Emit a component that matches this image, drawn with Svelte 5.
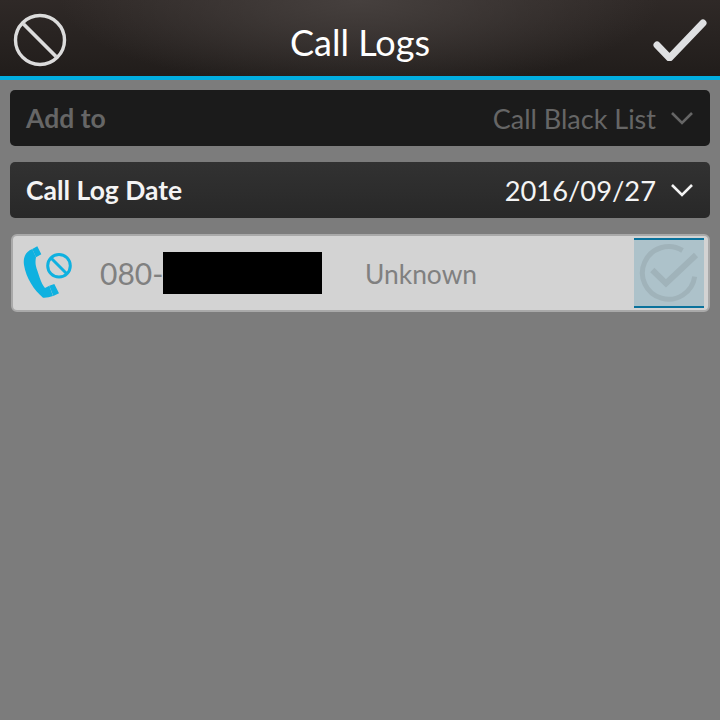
<script>
	let addTo = { label: 'Add to', value: 'Call Black List' };
	let logDate = { label: 'Call Log Date', value: '2016/09/27' };
</script>

<div class="screen">
	<header class="titlebar">
		<svg class="cancel" width="54" height="54" viewBox="0 0 54 54">
			<circle cx="27" cy="27" r="24.5" fill="none" stroke="#dcdcdc" stroke-width="3.4" />
			<line x1="10.500" y1="11" x2="43" y2="43.500" stroke="#dcdcdc" stroke-width="3.8" />
		</svg>
		<h1>Call Logs</h1>
		<svg class="accept" width="54" height="44" viewBox="0 0 54 44">
			<path d="M4 28 L16.500 41 L50 6" fill="none" stroke="#dfe0e2" stroke-width="7" stroke-linecap="round" stroke-linejoin="round" />
		</svg>
	</header>

	<main class="content">
		<div class="dropdown disabled">
			<span class="label">{addTo.label}</span>
			<span class="value">{addTo.value}</span>
			<svg class="chevron" width="24" height="14" viewBox="0 0 24 14">
				<path d="M2 2 L12 12 L22 2" fill="none" stroke="currentColor" stroke-width="2.6" />
			</svg>
		</div>

		<div class="dropdown">
			<span class="label date">{logDate.label}</span>
			<span class="value date">{logDate.value}</span>
			<svg class="chevron" width="24" height="14" viewBox="0 0 24 14">
				<path d="M2 2 L12 12 L22 2" fill="none" stroke="currentColor" stroke-width="2.6" />
			</svg>
		</div>

		<div class="log-row">
			<svg class="call-icon" width="52" height="54" viewBox="22 246 52 54">
				<path d="M32.300 249 C25 252 23 258 24 265 C26 278 34 290 43 297.700 Q48 298 53 296 L49.300 285.700 L45 288 C41 284 38 272 36.500 268.300 C35 263 35.500 260 36 257.300 Z" fill="#0fb1e0" />
				<path d="M32.300 249 L37.300 246.300 L41.300 254.300 L36 257.300 Z M49.300 285.700 L54.300 284 L59 293.300 L53.300 296 Z" fill="#0fb1e0" />
				<circle cx="59" cy="265.700" r="11.300" fill="none" stroke="#0fb1e0" stroke-width="3" />
				<line x1="51" y1="258" x2="67" y2="274" stroke="#0fb1e0" stroke-width="3" />
			</svg>
			<span class="number">080-<span class="redacted"></span></span>
			<span class="name">Unknown</span>
			<div class="check">
				<svg width="60" height="60" viewBox="0 0 60 60">
					<path d="M43.500 7.500 A26.300 26.300 0 1 0 55.700 33.700" fill="none" stroke="#a0b3ba" stroke-width="5" />
					<path d="M13.300 27 L27 40.300 L57 12" fill="none" stroke="#a0b3ba" stroke-width="6" />
				</svg>
			</div>
		</div>
	</main>
</div>

<style>
	:global(body) {
		margin: 0;
		background: #7c7c7c;
	}

	.screen {
		width: 720px;
		height: 720px;
		background: #7c7c7c;
		font-family: Lato, 'Open Sans', sans-serif;
		overflow: hidden;
	}

	.titlebar {
		box-sizing: border-box;
		height: 80px;
		padding: 0 13px 0 13px;
		display: flex;
		align-items: center;
		justify-content: space-between;
		position: relative;
		border-bottom: 4px solid #02aee0;
		background: radial-gradient(ellipse 300px 90px at 50% 0%, #46403e 0%, rgba(70, 64, 62, 0) 100%),
			linear-gradient(#2f2927, #211d1b);
	}

	.titlebar h1 {
		position: absolute;
		left: 0;
		right: 0;
		top: 20px;
		margin: 0;
		text-align: center;
		font-size: 36px;
		line-height: 44px;
		font-weight: 400;
		color: #fff;
	}

	.cancel {
		margin-top: 3px;
	}

	.accept {
		margin-top: 1px;
	}

	.content {
		padding: 10px 10px 0 10px;
		display: flex;
		flex-direction: column;
	}

	.dropdown {
		height: 56px;
		box-sizing: border-box;
		padding: 0 16px 0 16px;
		margin-bottom: 16px;
		border-radius: 5px;
		display: flex;
		align-items: center;
		font-size: 26.500px;
		color: #f4f4f4;
		background: linear-gradient(#323232, #282828);
	}

	.dropdown.disabled {
		color: #666;
		background: #1b1b1b;
	}

	.label {
		font-weight: 700;
		flex: 1;
	}

	.value {
		font-size: 27px;
		margin-right: 14px;
	}

	.value.date {
		font-size: 27.300px;
	}

	.log-row {
		box-sizing: border-box;
		height: 78px;
		margin-left: 1px;
		border: 2px solid #a9a9a9;
		border-radius: 6px;
		background: #d3d3d3;
		display: flex;
		align-items: center;
	}

	.call-icon {
		margin-left: 9px;
		flex: none;
	}

	.number {
		margin-left: 26px;
		width: 265px;
		font-size: 30px;
		color: #808080;
		display: flex;
		align-items: center;
	}

	.redacted {
		display: block;
		width: 159px;
		height: 42px;
		background: #000;
	}

	.name {
		font-size: 26.400px;
		padding-top: 2px;
		color: #808080;
		flex: 1;
	}

	.check {
		box-sizing: border-box;
		width: 70px;
		height: 70px;
		margin-right: 4px;
		border-top: 2px solid #0a729c;
		border-bottom: 2px solid #0a729c;
		background: #adc2ca;
		display: flex;
		align-items: center;
		justify-content: center;
	}
</style>
